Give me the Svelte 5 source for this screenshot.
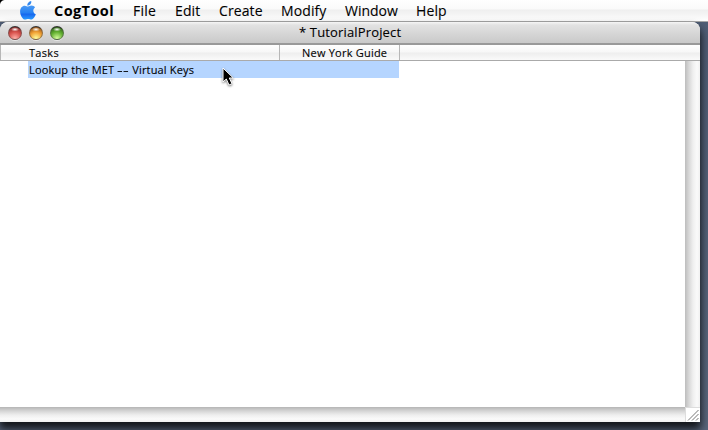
<script>
  const menus = [
    { label: 'File', width: 42, spacing: 0.2 },
    { label: 'Edit', width: 44, spacing: 0.1 },
    { label: 'Create', width: 62, spacing: 0.1 },
    { label: 'Modify', width: 64, spacing: 0.1 },
    { label: 'Window', width: 71, spacing: 0 },
    { label: 'Help', width: 50, spacing: 0.1 }
  ];
</script>

<div class="desktop">
  <nav class="menubar">
    <svg class="apple" width="16" height="19" viewBox="0 0 16 19" aria-hidden="true">
      <defs>
        <linearGradient id="aqua" x1="0" y1="0" x2="0" y2="1">
          <stop offset="0" stop-color="#4c9bf5" />
          <stop offset=".5" stop-color="#2681f2" />
          <stop offset=".62" stop-color="#1768ee" />
          <stop offset="1" stop-color="#2b9cff" />
        </linearGradient>
      </defs>
      <path fill="#3187ef" d="M7.4 4.8C7 2.5 9 .5 11.2 .1C11.7 2.5 9.9 4.7 7.4 4.8Z" />
      <path fill="url(#aqua)" d="M8 5.5C9 5.5 9.8 4.6 11.5 4.6C13 4.6 14.4 5.4 15 6.4C12.6 8.1 12.8 12 15.8 13.3C15 15.7 13.2 18.6 11.3 18.6C10.1 18.6 9.6 17.9 8.2 17.9C6.8 17.9 6.2 18.6 5 18.6C2.8 18.6.1 14.6.1 10.5C.1 7 2.2 4.7 4.8 4.7C6.3 4.7 7.2 5.5 8 5.5Z" />
    </svg>
    <span class="app">CogTool</span>
    {#each menus as m}
      <span class="menu" style:width="{m.width}px" style:letter-spacing="{m.spacing}px">{m.label}</span>
    {/each}
  </nav>

  <main class="window">
    <header class="titlebar">
      <div class="lights"><i class="red"></i><i class="amber"></i><i class="green"></i></div>
      <h1>* TutorialProject</h1>
    </header>
    <div class="columns">
      <div class="tasks-head"><span>Tasks</span></div>
      <div class="design-head"><span>New York Guide</span></div>
    </div>
    <div class="body">
      <div class="content">
        <div class="row"><span>Lookup the MET <span class="dash">--</span> Virtual Keys</span></div>
      </div>
      <div class="vscroll"></div>
    </div>
    <footer>
      <div class="hscroll"></div>
      <svg class="grip" width="15" height="15" viewBox="0 0 15 15" aria-hidden="true">
        <path d="M0 .5H15M.5 0V15" stroke="#ddd" fill="none" />
        <path d="M3 13.5L13.5 3M7 13.5L13.5 7M11 13.5L13.5 11" stroke="#777" fill="none" />
      </svg>
    </footer>
  </main>

  <svg class="cursor" width="14" height="21" viewBox="0 0 14 21" aria-hidden="true">
    <path d="M1 1V15L4.3 12L7 18L10 16.7L7.3 11H11.3Z" fill="#000" stroke="#fff" />
  </svg>
</div>

<style>
  .desktop {
    position: relative;
    width: 708px;
    height: 430px;
    overflow: hidden;
    background: linear-gradient(#4f5d75, #59667c);
    font-family: "Open Sans", "Noto Sans", sans-serif;
    color: #000;
    -webkit-text-stroke: .1px #000;
  }
  .menubar {
    display: flex;
    box-sizing: border-box;
    height: 22px;
    padding-left: 20px;
    border-bottom: 1px solid #a9a9a9;
    background:
      radial-gradient(circle at 5px 5px, #0000 4.5px, #000 5.5px) 0 0 / 5px 5px no-repeat,
      linear-gradient(#fff 0, #fafafa 9px, #efefef 10px, #f5f5f5 15px, #fff 21px);
    font-size: 14px;
    line-height: 22px;
    white-space: nowrap;
  }
  .apple { flex: none; margin: 1px 18px 0 0; }
  .app { width: 79px; font-size: 14.5px; font-weight: 700; letter-spacing: .4px; -webkit-text-stroke: 0; }
  .menu { flex: none; }
  .window {
    width: 700px;
    height: 400px;
    background: #fff;
    border-radius: 8px 8px 0 0;
    box-shadow: 0 6px 9px 1px rgba(0, 0, 0, .8);
  }
  .titlebar {
    display: flex;
    box-sizing: border-box;
    height: 23px;
    border-bottom: 2px solid #999;
    border-radius: 8px 8px 0 0;
    background: linear-gradient(#f6f6f6, #e2e2e2 3px, #c9c9c9);
  }
  .lights { display: flex; width: 299px; padding: 4px 0 0 8px; gap: 7px; box-sizing: border-box; }
  .lights i {
    width: 14px;
    height: 14px;
    box-sizing: border-box;
    border-radius: 50%;
    border: 1px solid #5558;
    border-top-color: #333;
    box-shadow: 0 1px 0 #fff8;
  }
  .red { background: radial-gradient(ellipse 4px 2px at 50% 20%, #fff, #fff0), radial-gradient(circle at 50% 95%, #ffb0a8, #d8514c 50%, #702020); }
  .amber { background: radial-gradient(ellipse 4px 2px at 50% 20%, #fff, #fff0), radial-gradient(circle at 50% 95%, #ffff9c, #f0a033 50%, #783a10); }
  .green { background: radial-gradient(ellipse 4px 2px at 50% 20%, #fff, #fff0), radial-gradient(circle at 50% 95%, #d8ff9e, #62b030 50%, #1f4c12); }
  h1 { margin: 0; font-size: 13px; line-height: 21px; font-weight: 400; letter-spacing: .15px; white-space: nowrap; }
  .columns {
    display: flex;
    box-sizing: border-box;
    height: 16px;
    border-bottom: 1px solid #aaa;
    background: linear-gradient(#fff, #f7f7f7 7px, #eee 8px, #fafafa);
    font-size: 11px;
    line-height: 16px;
    white-space: nowrap;
  }
  .tasks-head, .design-head { box-sizing: border-box; border-right: 1px solid #b7b7b7; }
  .tasks-head { width: 280px; padding-left: 28px; border-left: 1px solid #b7b7b7; letter-spacing: .3px; }
  .design-head { width: 120px; padding-left: 22px; letter-spacing: .22px; }
  .body { display: flex; height: 346px; }
  .content { width: 685px; }
  .row {
    width: 371px;
    height: 17px;
    margin-left: 28px;
    padding-left: 1px;
    box-sizing: border-box;
    background: #b5d5ff;
    font-size: 11px;
    line-height: 17px;
    letter-spacing: .17px;
    white-space: nowrap;
  }
  .dash { display: inline-block; height: 17px; vertical-align: top; transform: scaleX(1.6); transform-origin: 0 0; margin-right: 4.5px; }
  .vscroll { width: 15px; background: linear-gradient(90deg, #bdbdbd, #d8d8d8 4px, #efefef 8px, #fafafa 12px, #f0f0f0); }
  footer { display: flex; height: 15px; }
  .hscroll { width: 685px; background: linear-gradient(#b5b5b5, #d5d5d5 4px, #eee 8px, #fafafa 12px, #f0f0f0); }
  .grip { background: #fff; }
  .cursor { position: absolute; left: 222px; top: 67px; filter: drop-shadow(0 1px 1px #0008); }
</style>
